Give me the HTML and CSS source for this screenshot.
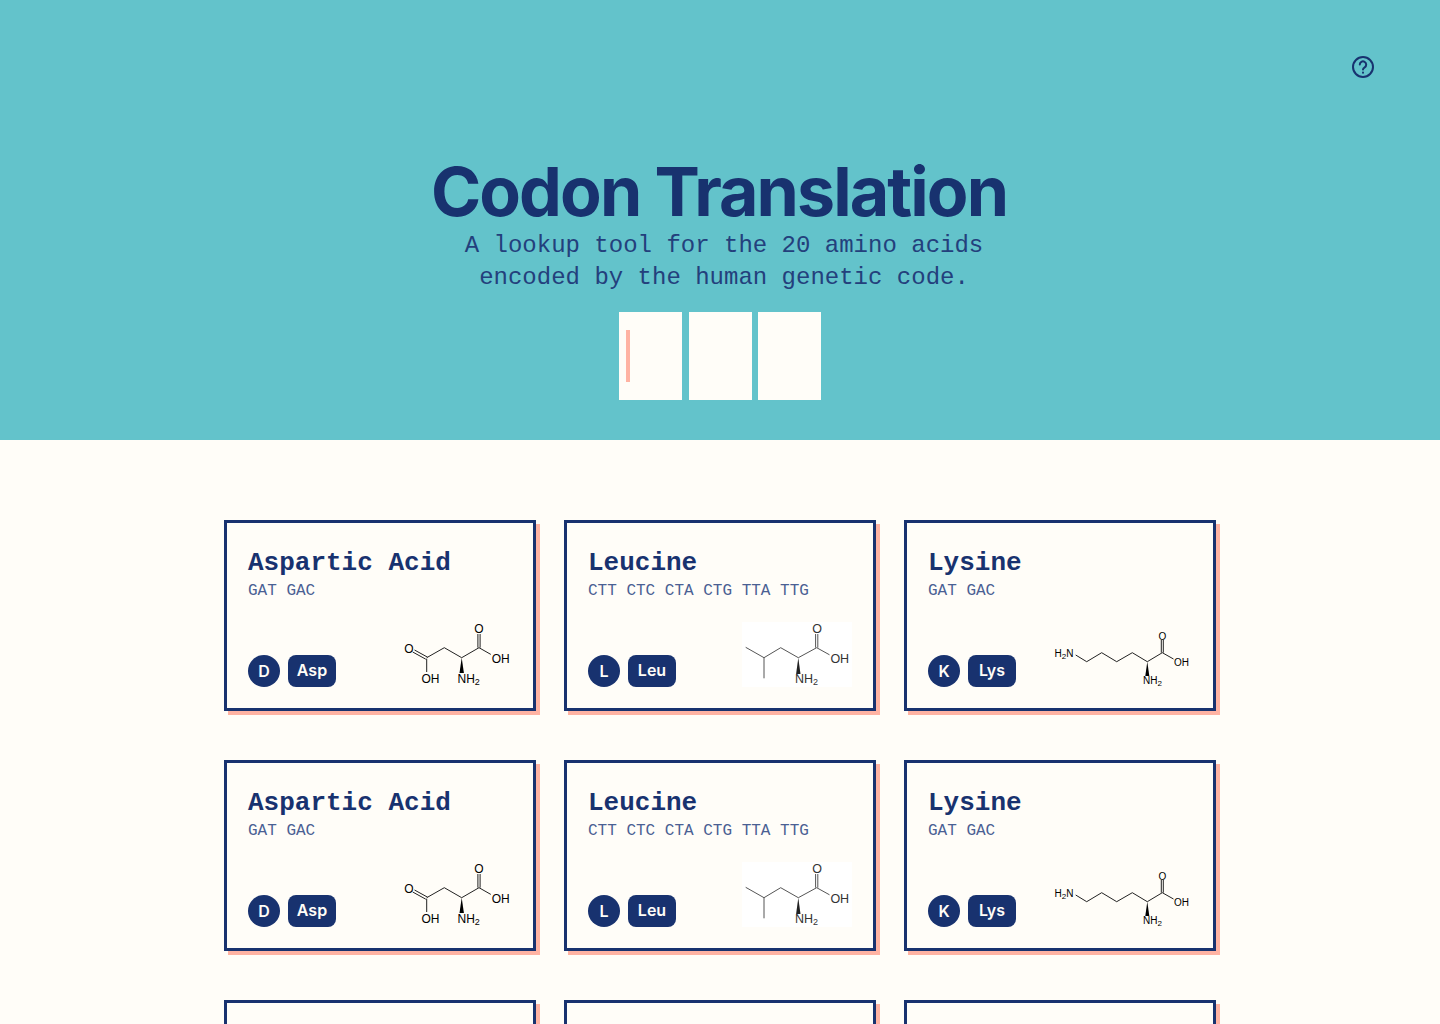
FILE: index.html
```html
<!DOCTYPE html>
<html lang="en">
<head>
    <meta charset="UTF-8">
    <meta name="viewport" content="width=device-width, initial-scale=1.0">
    <title>Codon Translation</title>
    <link rel="stylesheet" href="styles.css">
</head>
<body>
    <header class="hero">
        <div class="hero-top">
            <a class="help" href="#" aria-label="Help">
                <svg width="24" height="24" viewBox="0 0 24 24" fill="none" stroke="currentColor" stroke-width="2" stroke-linecap="round" stroke-linejoin="round">
                    <circle cx="12" cy="12" r="10"/>
                    <path d="M8.8 9.6a3.2 3.2 0 1 1 4.9 2.7c-1 .6-1.7 1.2-1.7 2.2"/>
                    <path d="M12 17.6v.1"/>
                </svg>
            </a>
        </div>
        <h1>Codon Translation</h1>
        <p class="lead">A lookup tool for the 20 amino acids<br>encoded by the human genetic code.</p>
        <div class="codon-inputs">
            <div class="codon-box"><span class="caret"></span></div>
            <div class="codon-box"></div>
            <div class="codon-box"></div>
        </div>
    </header>

    <main class="cards">
        <!-- row 1 -->
        <article class="card">
            <h2>Aspartic Acid</h2>
            <p class="codons">GAT GAC</p>
            <div class="card-foot">
                <div class="tags"><span class="letter">D</span><span class="abbr">Asp</span></div>
                <svg class="mol mol-asp" width="110" height="65" viewBox="0 0 110 65">
                    <path d="M25.6 35.2 12.5 28M23.8 37.2 10.7 30M24.7 36.7V50M24.7 35.7 42.3 25.7 59.7 35.7 77 25.7M75.9 25.7V12M78.1 25.7V12M77 25.7 88.8 32.4"/>
                    <path class="wedge" d="M59.7 35.7 61.9 51H57.5Z"/>
                    <text x="7" y="30.5" text-anchor="middle">O</text>
                    <text x="28.5" y="60.5" text-anchor="middle">OH</text>
                    <text x="77" y="10.5" text-anchor="middle">O</text>
                    <text x="89.7" y="40.5">OH</text>
                    <text x="55.5" y="61">NH<tspan class="sub" dy="2">2</tspan></text>
                </svg>
            </div>
        </article>
        <article class="card">
            <h2>Leucine</h2>
            <p class="codons">CTT CTC CTA CTG TTA TTG</p>
            <div class="card-foot">
                <div class="tags"><span class="letter">L</span><span class="abbr">Leu</span></div>
                <svg class="mol mol-leu" width="110" height="65" viewBox="0 0 110 65">
                    <path d="M3.7 25.3 22 35.7V56.3M22 35.7 38.7 25.7 56.3 35.7 74.7 25.7M73.6 25.7V12M75.8 25.7V12M74.7 25.7 87.5 32.8"/>
                    <path class="wedge" d="M56.3 35.7 58.5 52H54.1Z"/>
                    <text x="75.2" y="10.5" text-anchor="middle">O</text>
                    <text x="88.4" y="41.2">OH</text>
                    <text x="53" y="61">NH<tspan class="sub" dy="2">2</tspan></text>
                </svg>
            </div>
        </article>
        <article class="card">
            <h2>Lysine</h2>
            <p class="codons">GAT GAC</p>
            <div class="card-foot">
                <div class="tags"><span class="letter">K</span><span class="abbr">Lys</span></div>
                <svg class="mol mol-lys" width="140" height="65" viewBox="0 0 140 65">
                    <path d="M23.7 33 34.7 39.7 49.7 30.7 64.7 39.7 80.3 30.7 95.3 39.7 110.3 30.7M109.3 30.7V18M111.3 30.7V18M110.3 30.7 121.5 37"/>
                    <path class="wedge" d="M95.3 39.7 97.3 54H93.3Z"/>
                    <text x="2.6" y="35.4">H<tspan class="sub" dy="2">2</tspan><tspan dy="-2">N</tspan></text>
                    <text x="110.3" y="18" text-anchor="middle">O</text>
                    <text x="122" y="44.2">OH</text>
                    <text x="91" y="61.7">NH<tspan class="sub" dy="2">2</tspan></text>
                </svg>
            </div>
        </article>

        <!-- row 2 -->
        <article class="card">
            <h2>Aspartic Acid</h2>
            <p class="codons">GAT GAC</p>
            <div class="card-foot">
                <div class="tags"><span class="letter">D</span><span class="abbr">Asp</span></div>
                <svg class="mol mol-asp" width="110" height="65" viewBox="0 0 110 65">
                    <path d="M25.6 35.2 12.5 28M23.8 37.2 10.7 30M24.7 36.7V50M24.7 35.7 42.3 25.7 59.7 35.7 77 25.7M75.9 25.7V12M78.1 25.7V12M77 25.7 88.8 32.4"/>
                    <path class="wedge" d="M59.7 35.7 61.9 51H57.5Z"/>
                    <text x="7" y="30.5" text-anchor="middle">O</text>
                    <text x="28.5" y="60.5" text-anchor="middle">OH</text>
                    <text x="77" y="10.5" text-anchor="middle">O</text>
                    <text x="89.7" y="40.5">OH</text>
                    <text x="55.5" y="61">NH<tspan class="sub" dy="2">2</tspan></text>
                </svg>
            </div>
        </article>
        <article class="card">
            <h2>Leucine</h2>
            <p class="codons">CTT CTC CTA CTG TTA TTG</p>
            <div class="card-foot">
                <div class="tags"><span class="letter">L</span><span class="abbr">Leu</span></div>
                <svg class="mol mol-leu" width="110" height="65" viewBox="0 0 110 65">
                    <path d="M3.7 25.3 22 35.7V56.3M22 35.7 38.7 25.7 56.3 35.7 74.7 25.7M73.6 25.7V12M75.8 25.7V12M74.7 25.7 87.5 32.8"/>
                    <path class="wedge" d="M56.3 35.7 58.5 52H54.1Z"/>
                    <text x="75.2" y="10.5" text-anchor="middle">O</text>
                    <text x="88.4" y="41.2">OH</text>
                    <text x="53" y="61">NH<tspan class="sub" dy="2">2</tspan></text>
                </svg>
            </div>
        </article>
        <article class="card">
            <h2>Lysine</h2>
            <p class="codons">GAT GAC</p>
            <div class="card-foot">
                <div class="tags"><span class="letter">K</span><span class="abbr">Lys</span></div>
                <svg class="mol mol-lys" width="140" height="65" viewBox="0 0 140 65">
                    <path d="M23.7 33 34.7 39.7 49.7 30.7 64.7 39.7 80.3 30.7 95.3 39.7 110.3 30.7M109.3 30.7V18M111.3 30.7V18M110.3 30.7 121.5 37"/>
                    <path class="wedge" d="M95.3 39.7 97.3 54H93.3Z"/>
                    <text x="2.6" y="35.4">H<tspan class="sub" dy="2">2</tspan><tspan dy="-2">N</tspan></text>
                    <text x="110.3" y="18" text-anchor="middle">O</text>
                    <text x="122" y="44.2">OH</text>
                    <text x="91" y="61.7">NH<tspan class="sub" dy="2">2</tspan></text>
                </svg>
            </div>
        </article>

        <!-- row 3 -->
        <article class="card">
            <h2>Aspartic Acid</h2>
            <p class="codons">GAT GAC</p>
        </article>
        <article class="card">
            <h2>Leucine</h2>
            <p class="codons">CTT CTC CTA CTG TTA TTG</p>
        </article>
        <article class="card">
            <h2>Lysine</h2>
            <p class="codons">GAT GAC</p>
        </article>
    </main>
</body>
</html>
```

FILE: styles.css
```css
html, body {
    margin: 0;
    height: 1024px;
    overflow: hidden;
}

body {
    background-color: #fffdf8;
    color: #18326f;
    font-family: "Inter", sans-serif;
}

.hero {
    height: 440px;
    box-sizing: border-box;
    padding-top: 55px;
    background-color: #63c3cb;
    text-align: center;
}

.hero-top {
    display: flex;
    justify-content: flex-end;
    height: 24px;
    padding-right: 65px;
}

.help {
    color: #18326f;
    height: 24px;
}

h1 {
    margin: 72px 0 0;
    padding-right: 2px;
    font-size: 68px;
    font-weight: 700;
    line-height: 80px;
    letter-spacing: -1.9px;
}

.lead {
    margin: -1px 0 0;
    padding-left: 8px;
    font-family: "Liberation Mono", monospace;
    font-size: 24px;
    line-height: 32px;
    color: #23407c;
}

.codon-inputs {
    display: flex;
    justify-content: center;
    gap: 6.5px;
    margin-top: 18px;
}

.codon-box {
    width: 63px;
    height: 88px;
    box-sizing: border-box;
    padding: 18px 0 0 7px;
    background-color: #fffdf8;
}

.caret {
    display: block;
    width: 4px;
    height: 52px;
    background-color: #ffb3a3;
}

.cards {
    display: grid;
    grid-template-columns: repeat(3, 312px);
    column-gap: 28px;
    row-gap: 49px;
    justify-content: center;
    padding-top: 80px;
}

.card {
    display: flex;
    flex-direction: column;
    height: 191px;
    box-sizing: border-box;
    padding: 22px 21px 21px;
    border: 3px solid #18326f;
    box-shadow: 4px 4px 0 #ffb3a3;
}

.card h2 {
    margin: 0;
    font-family: "Liberation Mono", monospace;
    font-size: 26px;
    font-weight: 700;
    line-height: 36px;
}

.codons {
    margin: 0;
    font-family: "Liberation Mono", monospace;
    font-size: 16px;
    line-height: 20px;
    color: #4a6093;
}

.card-foot {
    display: flex;
    justify-content: space-between;
    align-items: flex-end;
    margin-top: auto;
}

.tags {
    display: flex;
    gap: 8px;
}

.letter, .abbr {
    display: flex;
    align-items: center;
    justify-content: center;
    height: 32px;
    box-sizing: border-box;
    background-color: #18326f;
    color: #fffdf8;
    font-size: 16px;
    font-weight: 600;
}

.letter {
    width: 32px;
    border-radius: 50%;
}

.abbr {
    width: 48px;
    padding-bottom: 2px;
    border-radius: 8px;
}

.mol {
    display: block;
}

.mol path {
    fill: none;
    stroke: #222;
    stroke-width: 1;
}

.mol .wedge {
    fill: #000;
    stroke: none;
}

.mol text {
    font-family: "Liberation Sans", sans-serif;
    font-size: 12px;
    fill: #000;
}

.mol .sub {
    font-size: 9px;
}

.mol-leu {
    background-color: #fff;
}

.mol-leu path {
    stroke: #555;
}

.mol-leu .wedge {
    fill: #222;
    stroke: none;
}

.mol-leu text {
    font-size: 12.5px;
    fill: #333;
}

.mol-lys text {
    font-size: 10px;
}

.mol-lys .sub {
    font-size: 8px;
}
```
